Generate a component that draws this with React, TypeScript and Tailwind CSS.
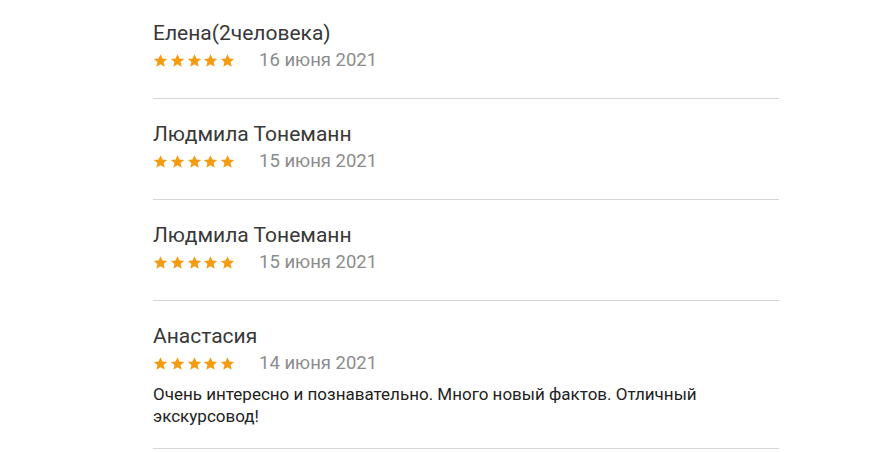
import React from "react";

type Review = {
  name: string;
  date: string;
  text?: string;
};

const reviews: Review[] = [
  { name: "Елена(2человека)", date: "16 июня 2021" },
  { name: "Людмила Тонеманн", date: "15 июня 2021" },
  { name: "Людмила Тонеманн", date: "15 июня 2021" },
  {
    name: "Анастасия",
    date: "14 июня 2021",
    text: "Очень интересно и познавательно. Много новый фактов. Отличный экскурсовод!",
  },
];

function Star() {
  return (
    <svg width="15" height="15" viewBox="0 0 24 24" className="shrink-0">
      <path
        d="M12 1.8l3.1 7.1 7.6.6-5.8 5 1.8 7.5L12 18l-6.7 4 1.8-7.5-5.8-5 7.6-.6z"
        fill="#f39c12"
      />
    </svg>
  );
}

function Stars() {
  return (
    <div className="flex items-center gap-[1.75px]">
      <Star />
      <Star />
      <Star />
      <Star />
      <Star />
    </div>
  );
}

export default function App() {
  return (
    <div
      className="min-h-[452px] bg-white"
      style={{ fontFamily: "Roboto, 'Noto Sans', sans-serif" }}
    >
      <div className="-mt-[2px] ml-[153px] w-[626px]">
        {reviews.map((r, i) => (
          <div key={i} className="border-b border-[#d6d6d6] pt-[23px] pb-[26px]">
            <div className="text-[21px] leading-6 text-[#383838]">{r.name}</div>
            <div className="mt-[3px] flex items-center h-6">
              <Stars />
              <span className="ml-6 text-[18.5px] leading-6 text-[#8c8c8c]">{r.date}</span>
            </div>
            {r.text && (
              <p className="mt-2 -mb-[5px] w-[580px] text-[17px] leading-[22px] text-[#222222]">
                {r.text}
              </p>
            )}
          </div>
        ))}
      </div>
    </div>
  );
}
